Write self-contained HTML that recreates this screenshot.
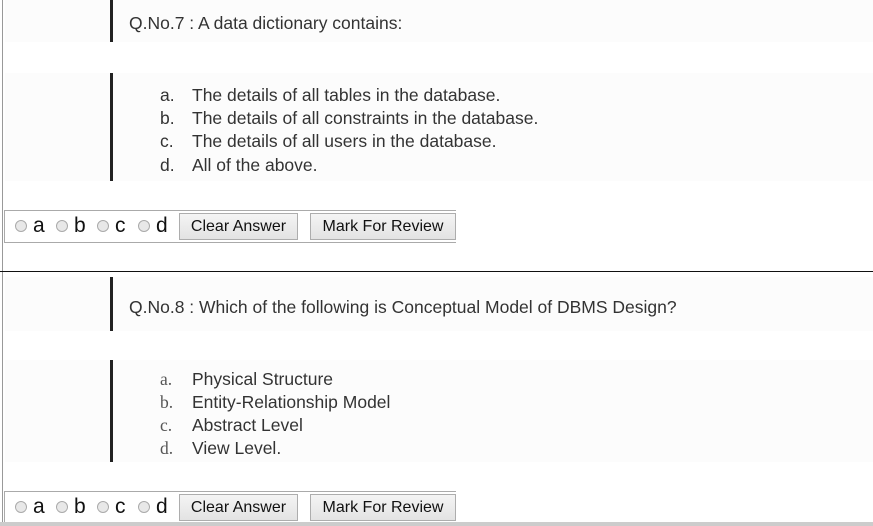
<!DOCTYPE html>
<html><head><style>
body{margin:0;width:873px;height:526px;background:#fff;position:relative;overflow:hidden;font-family:"Liberation Sans",sans-serif}
.a{position:absolute}
.bar{position:absolute;left:110px;width:3px;background:#222}
.img{position:absolute;left:5px;right:0;background:#fcfcfc}
.t{position:absolute;font-size:17.5px;color:#333;white-space:nowrap;letter-spacing:0}
.box{position:absolute;left:4px;width:451px;height:31px;border:1px solid #aaa;border-right:none}
.r{position:absolute;top:9px;width:12px;height:12px;border-radius:50%;border:1px solid #aaa;background:#e8e8e8;box-sizing:border-box}
.l{position:absolute;top:3px;font-size:21px;color:#111}
.btn{position:absolute;top:2px;height:27px;border:1px solid #adadad;background:linear-gradient(#f4f4f4,#e3e3e3);font-size:16px;color:#111;line-height:26px;text-align:center;box-sizing:border-box}
</style></head><body>
<div class="a" style="left:2px;top:0;width:1px;height:526px;background:#999"></div>
<div class="img" style="top:0;height:42px"></div>
<div class="img" style="top:73px;height:108px"></div>
<div class="bar" style="top:0;height:42px"></div>
<div class="t" style="left:129px;top:13px">Q.No.7 : A data dictionary contains:</div>
<div class="bar" style="top:73px;height:108px"></div>
<div class="t" style="left:160px;top:85px">a.</div><div class="t" style="left:192px;top:85px">The details of all tables in the database.</div>
<div class="t" style="left:160px;top:108px">b.</div><div class="t" style="left:192px;top:108px">The details of all constraints in the database.</div>
<div class="t" style="left:160px;top:131px">c.</div><div class="t" style="left:192px;top:131px">The details of all users in the database.</div>
<div class="t" style="left:160px;top:155px">d.</div><div class="t" style="left:192px;top:155px">All of the above.</div>

<div class="box" style="top:210px">
<div class="r" style="left:10px"></div><div class="l" style="left:28px">a</div>
<div class="r" style="left:51px"></div><div class="l" style="left:69px">b</div>
<div class="r" style="left:92px"></div><div class="l" style="left:110px">c</div>
<div class="r" style="left:133px"></div><div class="l" style="left:151px">d</div>
<div class="btn" style="left:174px;width:119px">Clear Answer</div>
<div class="btn" style="left:305px;width:146px">Mark For Review</div>
</div>

<div class="a" style="left:0;top:271px;width:873px;height:1px;background:#111"></div>

<div class="img" style="top:277px;height:54px"></div>
<div class="img" style="top:360px;height:102px"></div>
<div class="bar" style="top:277px;height:54px"></div>
<div class="t" style="left:129px;top:297px">Q.No.8 : Which of the following is Conceptual Model of DBMS Design?</div>
<div class="bar" style="top:360px;height:102px"></div>
<div class="t" style="left:160px;top:369px;font-family:'Liberation Serif',serif;color:#555">a.</div><div class="t" style="left:192px;top:369px">Physical Structure</div>
<div class="t" style="left:160px;top:392px;font-family:'Liberation Serif',serif;color:#555">b.</div><div class="t" style="left:192px;top:392px">Entity-Relationship Model</div>
<div class="t" style="left:160px;top:415px;font-family:'Liberation Serif',serif;color:#555">c.</div><div class="t" style="left:192px;top:415px">Abstract Level</div>
<div class="t" style="left:160px;top:438px;font-family:'Liberation Serif',serif;color:#555">d.</div><div class="t" style="left:192px;top:438px">View Level.</div>

<div class="box" style="top:491px">
<div class="r" style="left:10px"></div><div class="l" style="left:28px">a</div>
<div class="r" style="left:51px"></div><div class="l" style="left:69px">b</div>
<div class="r" style="left:92px"></div><div class="l" style="left:110px">c</div>
<div class="r" style="left:133px"></div><div class="l" style="left:151px">d</div>
<div class="btn" style="left:174px;width:119px">Clear Answer</div>
<div class="btn" style="left:305px;width:146px">Mark For Review</div>
</div>
<div class="a" style="left:0;top:522px;width:873px;height:4px;background:#ccc"></div>
</body></html>
